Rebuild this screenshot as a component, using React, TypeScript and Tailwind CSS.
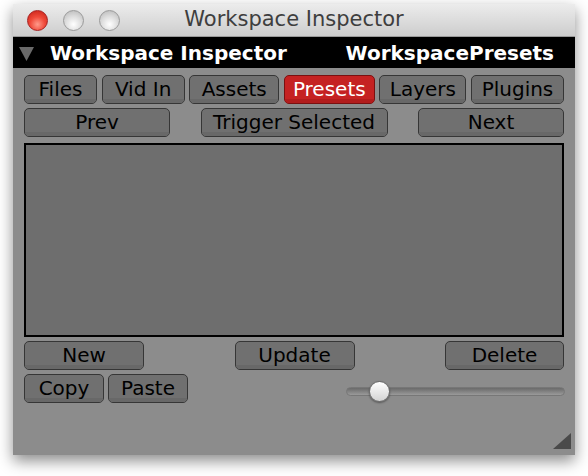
import React from "react";

const FONT = { fontFamily: '"DejaVu Sans", "Liberation Sans", sans-serif' };

function Btn({ label, w, active }: { label: string; w: number; active?: boolean }) {
  return (
    <div
      className={`relative h-[29px] flex items-center justify-center rounded-[5px] border-[1.5px] overflow-hidden text-[20px] leading-none ${
        active ? "bg-[#c52222] border-[#7a1010] text-white" : "bg-[#707070] border-[#363636] text-black"
      }`}
      style={{ width: w }}
    >
      <div className={`absolute left-0 right-0 bottom-0 h-[4px] ${active ? "bg-[#b21c1c]" : "bg-[#686868]"}`} />
      <span className="relative -mt-[1px]">{label}</span>
    </div>
  );
}

function Light({ red }: { red?: boolean }) {
  return (
    <div
      className={`w-[21px] h-[21px] rounded-full border ${
        red
          ? "border-[#a81f1f] bg-[radial-gradient(circle_at_50%_70%,#ff9a8a_0%,#f04a3a_45%,#c41e14_100%)]"
          : "border-[#9a9a9a] bg-[radial-gradient(circle_at_50%_70%,#ffffff_0%,#dcdcdc_50%,#b4b4b4_100%)]"
      }`}
    />
  );
}

export default function App() {
  return (
    <div className="w-[588px] h-[476px] bg-white pt-[4px] pl-[13px]" style={FONT}>
      <div className="w-[562px] h-[451px] bg-[#8c8c8c] flex flex-col shadow-[0_6px_14px_rgba(0,0,0,0.45)]">
        {/* title bar */}
        <div className="relative h-[33px] bg-gradient-to-b from-[#ececec] to-[#cdcdcd] border-b border-[#9a9a9a] flex items-center">
          <div className="flex gap-[15px] pl-[14px]">
            <Light red />
            <Light />
            <Light />
          </div>
          <span className="absolute inset-0 flex items-center justify-center text-[21px] text-[#3e3e3e]">
            Workspace Inspector
          </span>
        </div>
        {/* black header */}
        <div className="h-[31px] bg-black flex items-center text-white text-[20px] font-bold pl-[6px] pr-[21px]">
          <svg width="15" height="14" viewBox="0 0 15 14" className="mr-[16px] mt-[2px]">
            <polygon points="0,0 15,0 7.5,14" fill="#6a6a6a" />
          </svg>
          <span className="flex-1">Workspace Inspector</span>
          <span>WorkspacePresets</span>
        </div>
        {/* body */}
        <div className="flex-1 flex flex-col pl-[11px] pr-[11px] pt-[7px]">
          <div className="flex justify-between">
            <Btn label="Files" w={73} />
            <Btn label="Vid In" w={83} />
            <Btn label="Assets" w={90} />
            <Btn label="Presets" w={91} active />
            <Btn label="Layers" w={87} />
            <Btn label="Plugins" w={93} />
          </div>
          <div className="flex justify-between mt-[4px]">
            <Btn label="Prev" w={146} />
            <Btn label="Trigger Selected" w={187} />
            <Btn label="Next" w={146} />
          </div>
          <div className="mt-[6px] h-[194px] bg-[#6e6e6e] border-2 border-black" />
          <div className="flex justify-between mt-[4px]">
            <Btn label="New" w={120} />
            <Btn label="Update" w={120} />
            <Btn label="Delete" w={119} />
          </div>
          <div className="flex items-center mt-[4px]">
            <div className="flex gap-[4px]">
              <Btn label="Copy" w={80} />
              <Btn label="Paste" w={80} />
            </div>
            <div className="ml-auto mr-[-1px] relative w-[219px] h-[9px] rounded-full bg-gradient-to-b from-[#6a6a6a] to-[#9a9a9a] border border-[#777] mt-[6px]">
              <div className="absolute left-[22px] top-[-7px] w-[21px] h-[21px] rounded-full border border-[#6a6a6a] bg-gradient-to-b from-[#ffffff] to-[#d4d4d4] shadow-[0_1px_2px_rgba(0,0,0,0.4)]" />
            </div>
          </div>
          <div className="flex-1 flex items-end justify-end pb-[6px] mr-[-7px]">
            <svg width="18" height="16" viewBox="0 0 18 16">
              <polygon points="18,0 18,16 0,16" fill="#4a4a4a" />
            </svg>
          </div>
        </div>
      </div>
    </div>
  );
}
